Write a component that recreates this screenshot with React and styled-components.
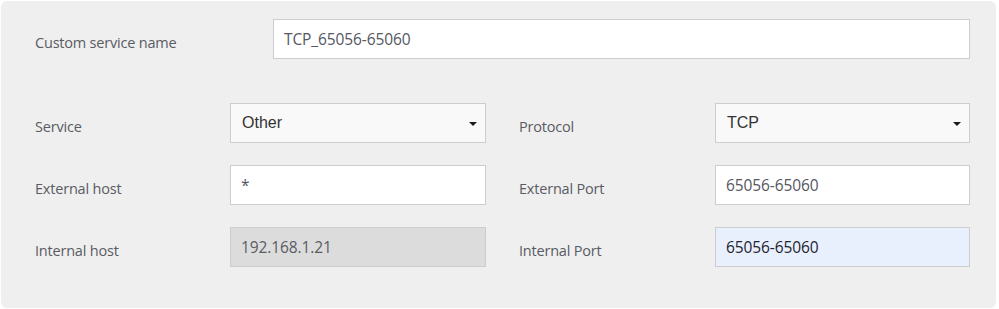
import React from 'react';
import styled, { createGlobalStyle } from 'styled-components';

const GlobalStyle = createGlobalStyle`
  html, body {
    margin: 0;
    padding: 0;
    background: #ffffff;
  }
  * {
    box-sizing: border-box;
  }
`;

const Panel = styled.div`
  margin: 1px 3px 1px 1px;
  background: #efefef;
  border-radius: 6px;
  padding: 18px 26px 41px 34px;
  font-family: 'Open Sans', 'Liberation Sans', sans-serif;
`;

const NameRow = styled.div`
  display: grid;
  grid-template-columns: 238px 1fr;
  align-items: center;
`;

const FieldGrid = styled.div`
  margin-top: 44px;
  display: grid;
  grid-template-columns: 1fr 1fr;
  column-gap: 33px;
  row-gap: 22px;
`;

const Field = styled.div`
  display: grid;
  grid-template-columns: ${(p) => p.$labelWidth || 195}px 1fr;
  align-items: center;
`;

const Label = styled.label`
  padding-top: 7px;
  font-size: 14.5px;
  color: #5a5b63;
  letter-spacing: -0.2px;
`;

const variants = {
  normal: { bg: '#ffffff', color: '#56575f' },
  disabled: { bg: '#dcdcdc', color: '#5a5b63' },
  autofill: { bg: '#e8f0fe', color: '#1f2430' },
};

const TextInput = styled.input`
  width: 100%;
  height: 40px;
  margin: 0;
  padding: 0 10px;
  border: 1px solid #cdcdcd;
  background: ${(p) => variants[p.$variant || 'normal'].bg};
  color: ${(p) => variants[p.$variant || 'normal'].color};
  font-family: 'Open Sans', 'Liberation Sans', sans-serif;
  font-size: 15.5px;
  letter-spacing: -0.1px;
  outline: none;
`;

const SelectBox = styled.div`
  height: 40px;
  display: flex;
  align-items: center;
  justify-content: space-between;
  padding: 0 8px 0 11px;
  border: 1px solid #cdcdcd;
  background: #f9f9f9;
  color: #333333;
  font-family: 'Liberation Sans', Arial, sans-serif;
  font-size: 16px;
`;

const Caret = styled.span`
  width: 0;
  height: 0;
  margin-top: 1px;
  border-left: 4px solid transparent;
  border-right: 4px solid transparent;
  border-top: 4px solid #1a1a1a;
`;

const Select = ({ value }) => (
  <SelectBox>
    <span>{value}</span>
    <Caret />
  </SelectBox>
);

export default function App() {
  return (
    <>
      <GlobalStyle />
      <Panel>
        <NameRow>
          <Label>Custom service name</Label>
          <TextInput defaultValue="TCP_65056-65060" />
        </NameRow>
        <FieldGrid>
          <Field>
            <Label>Service</Label>
            <Select value="Other" />
          </Field>
          <Field $labelWidth={196}>
            <Label>Protocol</Label>
            <Select value="TCP" />
          </Field>
          <Field>
            <Label>External host</Label>
            <TextInput defaultValue="*" />
          </Field>
          <Field $labelWidth={196}>
            <Label>External Port</Label>
            <TextInput defaultValue="65056-65060" />
          </Field>
          <Field>
            <Label>Internal host</Label>
            <TextInput $variant="disabled" defaultValue="192.168.1.21" disabled />
          </Field>
          <Field $labelWidth={196}>
            <Label>Internal Port</Label>
            <TextInput $variant="autofill" defaultValue="65056-65060" />
          </Field>
        </FieldGrid>
      </Panel>
    </>
  );
}
